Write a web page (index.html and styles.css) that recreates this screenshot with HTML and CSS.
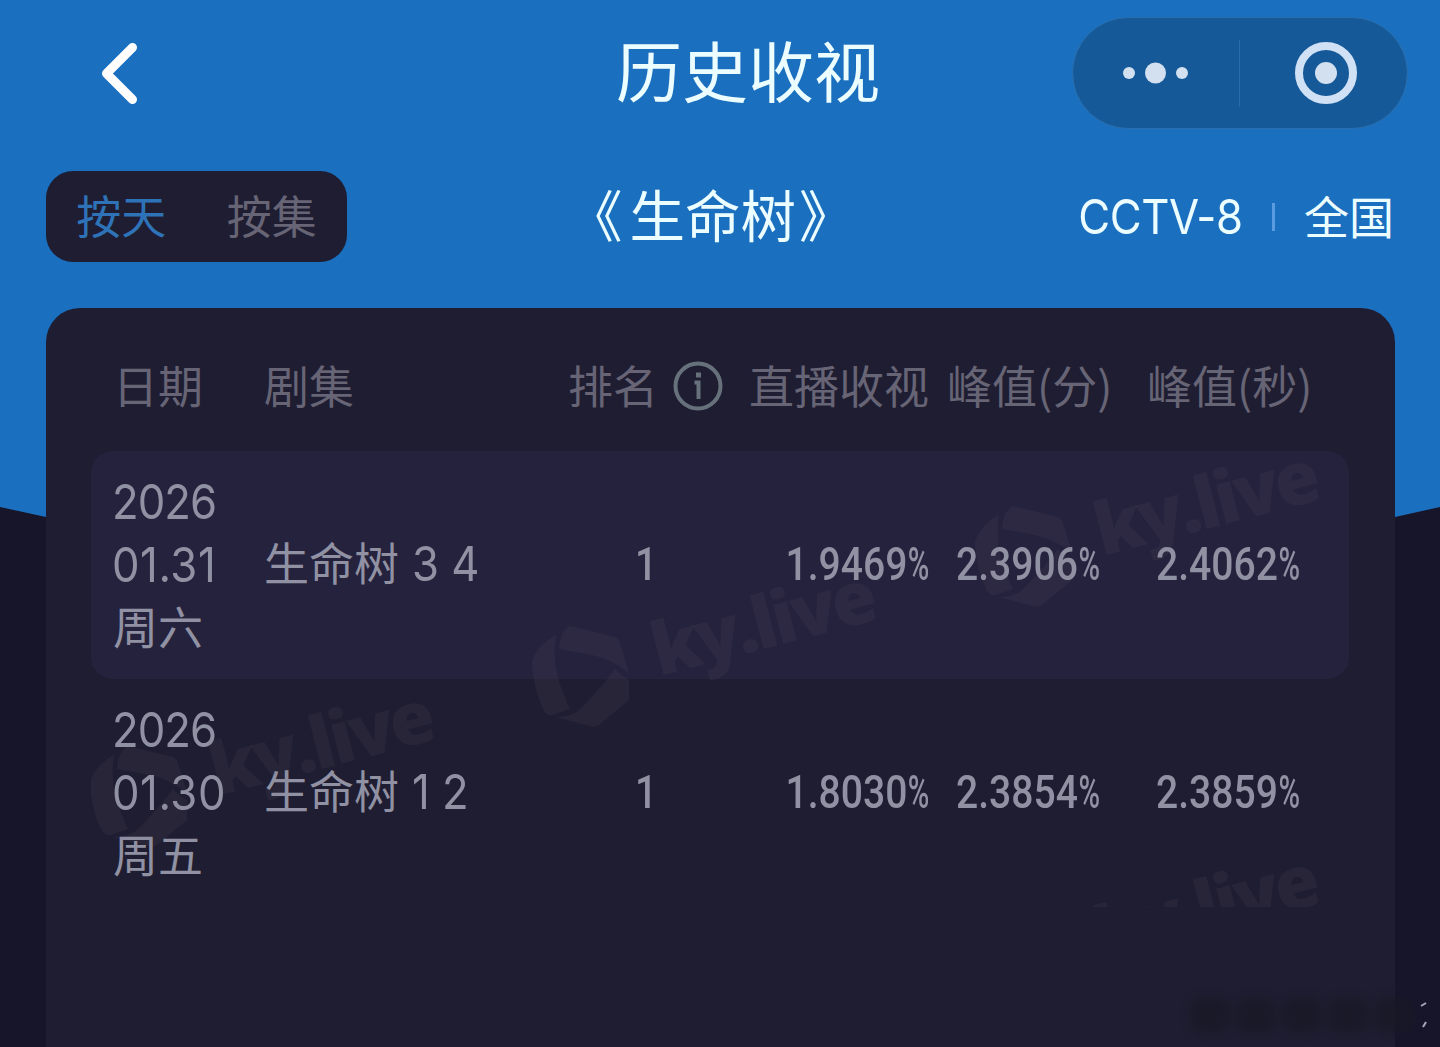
FILE: index.html
```html
<!DOCTYPE html>
<html lang="zh-CN">
<head>
  <meta charset="UTF-8" />
  <meta name="viewport" content="width=device-width, initial-scale=1.0"/>
  <title>历史收视</title>
  <link rel="stylesheet" href="styles.css">
</head>
<body>
  <div class="backdrop"></div>

  <header class="navbar">
    <svg class="back" viewBox="0 0 44 66" width="44" height="66">
      <path d="M34.500 7.500 L8.500 33.500 L34.500 59.500" />
    </svg>
    <h1>历史收视</h1>
    <div class="capsule">
      <svg viewBox="0 0 66 22" width="66" height="22">
        <circle cx="6" cy="11" r="6" />
        <circle cx="32.500" cy="11" r="10.500" />
        <circle cx="59" cy="11" r="6" />
      </svg>
      <span class="capsule-line"></span>
      <svg viewBox="0 0 62 62" width="62" height="62">
        <circle class="ring" cx="31" cy="31" r="27" />
        <circle cx="31" cy="31" r="11" />
      </svg>
    </div>
  </header>

  <section class="subbar">
    <div class="tabs">
      <span class="tab active">按天</span>
      <span class="tab">按集</span>
    </div>
    <h2><span class="quote-open">《</span>生命树<span class="quote-close">》</span></h2>
    <div class="channel">
      <span class="latin">CCTV-8</span>
      <span class="channel-line"></span>
      <span>全国</span>
    </div>
  </section>

  <main class="panel">
    <div class="row head">
      <div>日期</div>
      <div>剧集</div>
      <div class="rank-head">排名
        <svg class="info" viewBox="0 0 50 50" width="50" height="50">
          <circle cx="25" cy="25" r="22.500" />
          <path d="M21.500 21.500 H25.500 V38" />
          <path class="dot" d="M23 11.500 h5 v5 h-5 z" />
        </svg>
      </div>
      <div class="live">直播收视</div>
      <div class="peak">峰值(分)</div>
      <div class="peak">峰值(秒)</div>
    </div>

    <div class="rows">
      <div class="row item striped">
        <div class="date"><span class="latin">2026</span><span class="latin day">01.31</span><span>周六</span></div>
        <div>生命树 <span class="latin episode">3 4</span></div>
        <div class="rank"><span class="num">1</span></div>
        <div class="live"><span class="num">1.9469<b>%</b></span></div>
        <div class="peak"><span class="num">2.3906<b>%</b></span></div>
        <div class="peak"><span class="num">2.4062<b>%</b></span></div>
      </div>
      <div class="row item">
        <div class="date"><span class="latin">2026</span><span class="latin day">01.30</span><span>周五</span></div>
        <div>生命树 <span class="latin episode">1 2</span></div>
        <div class="rank"><span class="num">1</span></div>
        <div class="live"><span class="num">1.8030<b>%</b></span></div>
        <div class="peak"><span class="num">2.3854<b>%</b></span></div>
        <div class="peak"><span class="num">2.3859<b>%</b></span></div>
      </div>

      <!-- repeated watermark, cut off at the end of the rows -->
      <svg class="watermark" viewBox="0 0 1258 456" width="1258" height="456">
        <defs>
          <g id="mark">
            <path d="M35 9 Q16 19 11 36 Q12 62 22 83 Q25 90 32 89 L49 83 Q35 53 34 34 Q33 20 35 9 Z" />
            <path d="M49 0 L94 11 Q98 13 99 17 L108 47 Q90 33 71 29 L38 23 Q39 5 49 0 Z" />
            <path d="M94 43 Q100 50 108 54 L108 74 L78 99 Q74 102 68 100 L35 91 Q48 91 57 85 Q77 66 94 43 Z" />
            <text transform="translate(138 50) rotate(-14.500)" textLength="230">ky.live</text>
          </g>
        </defs>
        <use href="#mark" x="-12" y="295" />
        <use href="#mark" x="430" y="175" />
        <use href="#mark" x="873" y="55" />
        <use href="#mark" x="873" y="459" />
      </svg>
    </div>
  </main>

  <div class="smudge">
    <i></i><i></i><i></i><i></i><i></i>
    <svg viewBox="0 0 8 28" width="8" height="28">
      <path d="M1 5 L6 2" />
      <path d="M3 26 L6 21" />
    </svg>
  </div>
</body>
</html>
```
FILE: styles.css
```css
:root {
  --blue: #1a6fbf;
  --page-bg: #17152a;
  --panel-bg: #1f1d31;
  --stripe-bg: #25223d;
  --head-text: #666475;
  --cell-text: #9091a3;
  --white: #ecfdff;
}

* {
  box-sizing: border-box;
}

body {
  position: relative;
  margin: 0;
  height: 1047px;
  overflow: hidden;
  background: var(--page-bg);
  font-family: 'Noto Sans CJK SC', sans-serif;
  font-size: 45px;
  color: var(--cell-text);
}

h1, h2 {
  margin: 0;
  font-weight: 400;
  color: var(--white);
  white-space: nowrap;
}

/* blue area behind everything, its lower corners are slanted */
.backdrop {
  position: absolute;
  inset: 0 0 auto 0;
  z-index: -1;
  height: 530px;
  background: var(--blue);
  clip-path: polygon(0 0, 100% 0, 100% 507px, 1395px 517px, 46px 517px, 0 507px);
}

.navbar {
  display: grid;
  grid-template-columns: 518px 1fr 336px;
  align-items: center;
  height: 146px;
  padding: 0 32px 0 98px;
}

.navbar h1 {
  padding-bottom: 10px;
  font-size: 66px;
  line-height: 136px;
}

.back path {
  fill: none;
  stroke: #fff;
  stroke-width: 9;
  stroke-linecap: round;
  stroke-linejoin: round;
}

.capsule {
  display: flex;
  align-items: center;
  height: 112px;
  padding-left: 50px;
  border: 1px solid #2a70b0;
  border-radius: 56px;
  background: #155998;
}

.capsule circle {
  fill: #d3e0ef;
}

.capsule .ring {
  fill: none;
  stroke: #d0e1f5;
  stroke-width: 8;
}

.capsule-line {
  width: 1px;
  height: 67px;
  margin: 0 55px 0 50px;
  background: #2a6ca8;
}

.subbar {
  display: grid;
  grid-template-columns: 528px 1fr auto;
  align-items: center;
  height: 91px;
  margin-top: 25px;
  padding: 0 46px;
}

.subbar h2 {
  padding-bottom: 6px;
  font-size: 55.5px;
  line-height: 85px;
}

.quote-open {
  margin: 0 7px 0 -7px;
}

.quote-close {
  margin-left: 3px;
}

.tabs {
  display: flex;
  width: 301px;
  height: 91px;
  border-radius: 27px;
  background: var(--panel-bg);
  line-height: 88px;
}

.tab {
  flex: 1;
  text-align: center;
  color: var(--head-text);
}

.tab.active {
  color: #2e73b8;
}

.channel {
  display: flex;
  align-items: center;
  line-height: 87px;
  color: var(--white);
}

.channel span:last-child {
  padding-bottom: 3px;
}

.channel .latin {
  letter-spacing: -.5px;
  transform-origin: right center;
}

.channel-line {
  width: 3px;
  height: 28px;
  margin: 0 29px;
  background: #5b9be0;
}

.latin {
  display: inline-block;
  font-family: Inter, sans-serif;
  font-size: 48px;
  letter-spacing: -1px;
  transform: scaleX(.91);
  transform-origin: left center;
}

.num {
  display: inline-block;
  font-family: Roboto, sans-serif;
  font-weight: 500;
  font-size: 46px;
  transform: scaleX(.85);
  transform-origin: left center;
}

/* the percent sign is drawn narrower than the digits */
.num b {
  display: inline-block;
  margin-right: -8px;
  font-weight: 500;
  transform: scaleX(.75);
  transform-origin: left center;
}

.panel {
  height: 760px;
  margin: 46px 45px 0 46px;
  padding: 0 46px 0 45px;
  border-radius: 34px 34px 0 0;
  background: var(--panel-bg);
}

.row {
  display: grid;
  grid-template-columns: 151px 304px 160px 201px 200px 200px;
  align-items: center;
  padding-left: 22px;
  white-space: nowrap;
}

.head {
  height: 143px;
  color: var(--head-text);
  line-height: 153px;
}

.rank-head {
  display: flex;
  align-items: center;
  gap: 15px;
}

.info {
  margin-top: 2px;
  fill: none;
  stroke: #67717b;
  stroke-width: 4;
}

.info .dot {
  fill: #67717b;
  stroke: none;
}

.live {
  text-align: right;
}

.live .num {
  transform-origin: right center;
}

.peak {
  padding-left: 18px;
}

.item .peak {
  padding-left: 27px;
}

.rank {
  padding-left: 67px;
}

.rows {
  position: relative;
}

.item {
  height: 228px;
  padding-bottom: 5px;
  line-height: 63px;
}

.striped {
  border-radius: 22px;
  background: var(--stripe-bg);
}

.date span {
  display: block;
  height: 63px;
}

.date .latin {
  margin-left: -1px;
  padding-top: 2px;
}

.date .day {
  letter-spacing: .6px;
}

.episode {
  margin-left: 3px;
  letter-spacing: 0;
}

.watermark {
  position: absolute;
  left: 0;
  top: 0;
  fill: rgba(130, 120, 135, .09);
}

.watermark text {
  font-family: 'Open Sans', sans-serif;
  font-weight: 800;
  font-size: 73px;
}

/* faded dark patch in the corner */
.smudge {
  position: absolute;
  right: 12px;
  bottom: 14px;
  display: flex;
  align-items: center;
  gap: 6px;
}

.smudge i {
  width: 40px;
  height: 36px;
  border-radius: 14px;
  background: #191825;
  opacity: .7;
  filter: blur(5px);
}

.smudge svg {
  fill: none;
  stroke: #a9a9b5;
  stroke-width: 2;
}
```
